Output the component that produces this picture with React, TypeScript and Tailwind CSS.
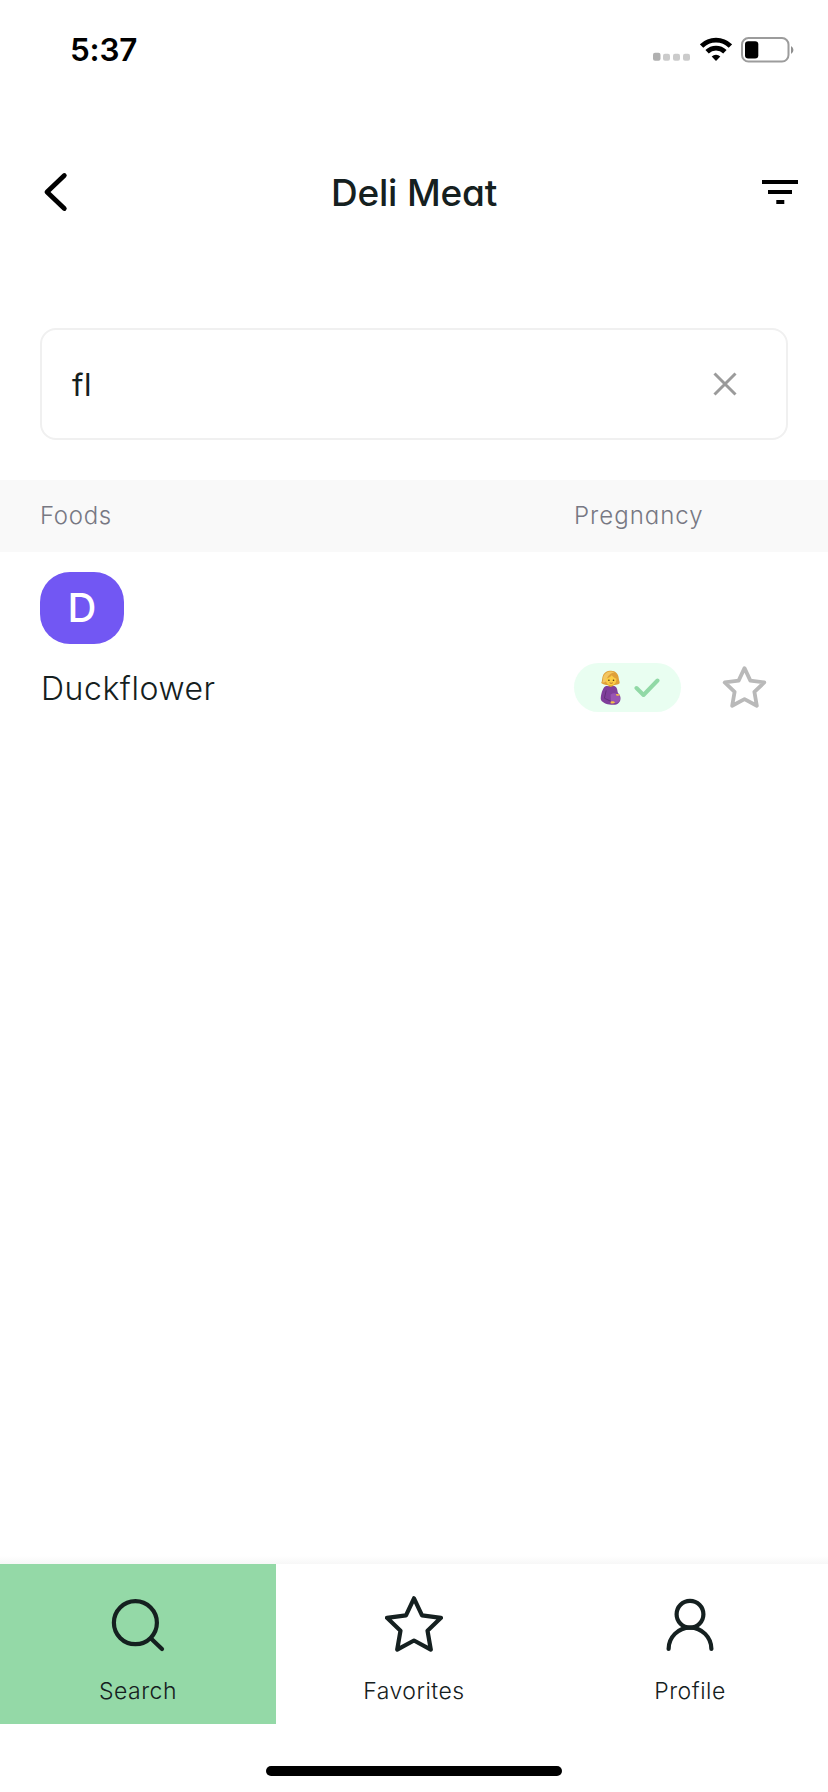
import type { ReactNode } from 'react';

const STAR = 'M29 4.3 L37 21.3 L56 23.8 L42.5 36.7 L45.8 55.6 L29 46.5 L12.2 55.6 L15.5 36.7 L2 23.8 L21 21.3 Z';

function StatusBar() {
  return (
    <div className="flex h-[100px] items-center justify-between pl-[70px] pr-[34px]">
      <span className="text-[31.5px] leading-none font-semibold tracking-[-0.2px] text-black">5:37</span>

      <div className="flex items-center">
        {/* No signal */}
        <svg width="38" height="26" viewBox="0 0 38 26" className="mr-[9px]">
          <rect x="0" y="15.8" width="7.5" height="8" rx="2" fill="#b0b0b0" />
          <rect x="10" y="16.8" width="7" height="7" rx="2" fill="#cbcbcb" />
          <rect x="20" y="16.8" width="7" height="7" rx="2" fill="#cbcbcb" />
          <rect x="30" y="16.8" width="7" height="7" rx="2" fill="#cbcbcb" />
        </svg>

        <svg width="32" height="26" viewBox="0 0 32 26" className="mr-[9px]" fill="none" stroke="#000" strokeWidth="4.8">
          <path d="M1.6 9 A20.5 20.5 0 0 1 30.4 9" />
          <path d="M7.1 14.8 A12.8 12.8 0 0 1 24.9 14.8" />
          <path d="M11.7 19.4 A6.2 6.2 0 0 1 20.3 19.4 L16 24 Z" fill="#000" stroke="none" />
        </svg>

        <svg width="53" height="26" viewBox="0 0 53 26">
          <rect x="1" y="1.1" width="46.5" height="23.4" rx="6.5" fill="none" stroke="#9c9c9c" strokeWidth="2" />
          <rect x="4" y="4.2" width="13.3" height="17.2" rx="3.2" fill="#000" />
          <path d="M50 9 a4.5 4.5 0 0 1 0 8 Z" fill="#8f8f8f" />
        </svg>
      </div>
    </div>
  );
}

function PregnantWoman() {
  return (
    <svg width="22" height="36" viewBox="0 0 22 36">
      <path d="M1.2 13 C2.6 11 1.6 8 3.4 4.6 C5 1.4 8 .4 10.8 .7 C15.6 .6 18.4 4 18.7 8 C18.8 10.4 20 11.6 19.6 13.2 C17.4 15.6 5 16.6 1.2 13 Z" fill="#dfa038" />
      <path d="M3.4 6.6 C5.4 1.8 10.6 .4 14.6 2.6 C10.4 3.2 7.4 5.6 6.2 11 C5 12.6 3 12.8 2.2 12.4 C3.6 11 2.8 8.6 3.4 6.6 Z" fill="#f3c661" />
      <path d="M8.4 13 h5 v4.6 h-5 Z" fill="#e0a62f" />
      <path d="M5.8 8.8 C8 8.4 10.5 7 11.7 5.2 C13 7 15 8.3 16.4 8.8 C16.6 13 14.4 15.2 11.2 15.2 C7.8 15.2 5.6 12.8 5.8 8.8 Z" fill="#fbcd45" />
      <circle cx="8.9" cy="10.2" r=".8" fill="#4a3010" />
      <circle cx="13.5" cy="10.2" r=".8" fill="#4a3010" />
      <path d="M9.6 12.8 q1.7 1.1 3.2 0" fill="none" stroke="#b3642a" strokeWidth=".9" />
      <path d="M4 17.4 C6 15.4 8 15.8 10.8 17 C13 15.6 15 15.6 16.5 17.8 C17.5 19.5 17.4 21.4 18 23 C21.8 26 21.2 32.4 17 34.2 C13 35.8 3.4 34.4 1 30 C.2 27 2 20 4 17.4 Z" fill="#7f3f9b" />
      <path d="M10.6 24.4 C15.6 21.4 20.6 25 20 29.4 C18.8 33.6 13.4 34 11 31.8 Z" fill="#9854b3" />
      <path d="M6.2 20.4 L4.4 28.2 L11 31.4" fill="none" stroke="#62307a" strokeWidth="1" />
      <path d="M10.6 31.6 q3.2 -1.2 4.4 .8 q-1.2 1.6 -4.4 .8 Z" fill="#f5c046" />
      <path d="M16 24 q3 -.4 4.2 1.2 q-1.8 .8 -3.8 .3 Z" fill="#f5c046" />
    </svg>
  );
}

function TabItem({ label, active, children }: { label: string; active?: boolean; children: ReactNode }) {
  return (
    <button className={`flex h-40 flex-1 flex-col items-center pt-[30px] ${active ? 'bg-[#94d9a7]' : 'bg-white'}`}>
      {children}
      <span className="mt-[21px] text-[23px] leading-9 font-[350] tracking-[0.5px] text-[#152020]">{label}</span>
    </button>
  );
}

export default function App() {
  return (
    <main className="flex h-[1792px] w-[828px] flex-col bg-white font-['Inter',sans-serif] text-[#152020]">
      <StatusBar />

      {/* Header */}
      <header className="flex h-[184px] items-center justify-between px-[30px]">
        <div className="flex w-[46px] justify-end">
          <svg width="36" height="44" viewBox="0 0 36 44" fill="none" stroke="#000" strokeWidth="4.8" strokeLinecap="round" strokeLinejoin="round">
            <path d="M24.3 5.5 L7 22 L24.3 38.5" />
          </svg>
        </div>
        <h1 className="text-[37px] leading-none font-medium tracking-[-0.2px] [font-feature-settings:'cv11']">Deli Meat</h1>
        <div className="flex w-[46px] justify-end">
          <svg width="36" height="24" viewBox="0 0 36 24">
            <path d="M0 0h36v4H0zM6 10h24v4H6zM14.3 20h8v4h-8z" fill="#000" />
          </svg>
        </div>
      </header>

      {/* Search box */}
      <div className="mx-10 mt-11 flex h-28 items-center justify-between rounded-2xl border-2 border-[#f0f0f0] pl-[30px] pr-[49px]">
        <span className="pt-px text-[31px] leading-none font-normal tracking-[0.5px]">fl</span>
        <svg width="24" height="24" viewBox="0 0 24 24" stroke="#9b9b9b" strokeWidth="3">
          <path d="M1.5 1.5 L22.5 22.5 M22.5 1.5 L1.5 22.5" />
        </svg>
      </div>

      {/* Table head */}
      <div className="mt-10 flex h-[72px] items-center bg-[#f9f9f9] pl-10 text-2xl font-[350] text-[#777883] [font-feature-settings:'cv11']">
        <span className="w-[534px] tracking-[0.7px]">Foods</span>
        <span className="tracking-[1px]">Pregnancy</span>
      </div>

      <div className="flex flex-1 flex-col pt-5 pl-10">
        <div className="flex h-[72px] w-[84px] items-center justify-center rounded-[30px] bg-[#7257f3] text-[40px] leading-none font-medium text-white">
          D
        </div>

        <div className="mt-[19px] flex h-[49px] items-center">
          <span className="w-[534px] pt-[3px] pl-px text-[32px] leading-none font-[350] tracking-[0.55px] [font-feature-settings:'cv11']">
            Duckflower
          </span>
          <div className="flex h-[49px] w-[107px] items-center rounded-full bg-[#e9fef1] pl-[26px]">
            <PregnantWoman />
            <svg width="26" height="20" viewBox="0 0 26 20" className="ml-3" fill="none" stroke="#91d9a6" strokeWidth="4" strokeLinecap="round" strokeLinejoin="round">
              <path d="M2.5 10 L9.5 17 L23.5 2.5" />
            </svg>
          </div>
          <svg width="43" height="44" viewBox="0 0 58 60" className="mb-0.5 ml-[41.5px] overflow-visible" fill="none" stroke="#b9b9b9" strokeWidth="5.2" strokeLinejoin="round">
            <path d={STAR} />
          </svg>
        </div>
      </div>

      {/* Bottom tabs */}
      <div className="h-2 bg-linear-to-b from-white to-[#f7f7f7]" />
      <nav className="flex">
        <TabItem label="Search" active>
          <svg width="58" height="58" viewBox="0 0 58 58" fill="none" stroke="#152020" strokeWidth="4.2" strokeLinecap="round">
            <circle cx="26.4" cy="28.7" r="21.5" />
            <path d="M42 44.4 L53 55" />
          </svg>
        </TabItem>
        <TabItem label="Favorites">
          <svg width="58" height="58" viewBox="0 0 58 58" fill="none" stroke="#152020" strokeWidth="4.2" strokeLinejoin="round">
            <path d={STAR} />
          </svg>
        </TabItem>
        <TabItem label="Profile">
          <svg width="58" height="58" viewBox="0 0 58 58" fill="none" stroke="#152020" strokeWidth="4.2" strokeLinecap="round">
            <circle cx="29" cy="20.2" r="13.4" />
            <path d="M7.6 55 A21.4 21.4 0 0 1 50.4 55" />
          </svg>
        </TabItem>
      </nav>
      <div className="flex h-[68px] justify-center pt-[42px]">
        <div className="h-2.5 w-[296px] rounded-full bg-black" />
      </div>
    </main>
  );
}
